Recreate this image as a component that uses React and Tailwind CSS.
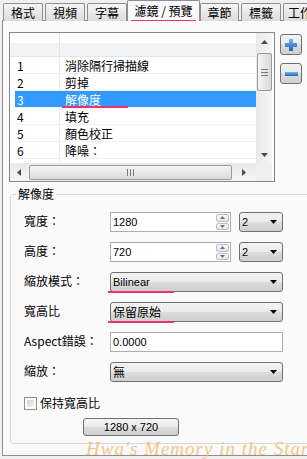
import React from "react";

const tabs = [
  { label: "格式", cls: "ml-[3px] w-[40px] justify-center" },
  { label: "視頻", cls: "ml-[2px] w-[40px] justify-center" },
  { label: "字幕", cls: "ml-[2px] w-[40px] justify-center" },
  { label: "濾鏡 / 預覽", active: true, cls: "w-[73px]" },
  { label: "章節", cls: "w-[39px] justify-center" },
  { label: "標籤", cls: "ml-[2px] w-[40px] justify-center" },
  { label: "工作", cls: "ml-[2px] w-[50px] justify-start pl-[4px]" },
];

const filters = [
  ["1", "消除隔行掃描線"],
  ["2", "剪掉"],
  ["3", "解像度", true],
  ["4", "填充"],
  ["5", "顏色校正"],
  ["6", "降噪："],
  ["", ""],
];

const winGrad = "bg-[linear-gradient(#f2f2f2,#ebebeb_50%,#dddddd_50%,#cfcfcf)]";
const latin = "font-['Liberation_Sans',sans-serif] text-[11px]";

const Tri = ({ dir, color = "#4a4a4a" }) => {
  if (dir === "up")
    return (
      <svg width="7" height="4" viewBox="0 0 7 4">
        <path d="M0 4L3.5 0L7 4Z" fill={color} />
      </svg>
    );
  if (dir === "down")
    return (
      <svg width="7" height="4" viewBox="0 0 7 4">
        <path d="M0 0L7 0L3.5 4Z" fill={color} />
      </svg>
    );
  if (dir === "left")
    return (
      <svg width="4" height="7" viewBox="0 0 4 7">
        <path d="M4 0L4 7L0 3.5Z" fill={color} />
      </svg>
    );
  return (
    <svg width="4" height="7" viewBox="0 0 4 7">
      <path d="M0 0L4 3.5L0 7Z" fill={color} />
    </svg>
  );
};

const Dropdown = ({ value, width, mark, textCls = "text-[12px]" }) => (
  <div
    className={`relative ${width} h-[20px] rounded-[3px] border border-[#707070] ${winGrad} flex items-center justify-between pl-[2px] pr-[5px]`}
  >
    <span className={`${textCls} leading-none text-black`}>{value}</span>
    <Tri dir="down" color="#000" />
    {mark && (
      <div className="absolute left-[-3px] bottom-[-2px] w-[66px] h-[2px] bg-[#f0306e]" />
    )}
  </div>
);

const Spin = () => (
  <div className="w-[14px] h-full flex flex-col justify-center gap-px py-px pr-px">
    {["up", "down"].map((d) => (
      <div
        key={d}
        className="h-[8px] rounded-[2px] border border-[#b9bcc2] bg-gradient-to-b from-[#fbfbfb] to-[#e2e4e8] flex items-center justify-center"
      >
        {d === "up" ? (
          <svg width="5" height="3" viewBox="0 0 5 3">
            <path d="M0 3L2.5 0L5 3Z" fill="#56739b" />
          </svg>
        ) : (
          <svg width="5" height="3" viewBox="0 0 5 3">
            <path d="M0 0L5 0L2.5 3Z" fill="#56739b" />
          </svg>
        )}
      </div>
    ))}
  </div>
);

const Label = ({ children }) => (
  <div className="w-[86px] mb-[3px] text-[12px] leading-[14px] text-black">{children}</div>
);

export default function App() {
  return (
    <div className="relative w-[307px] h-[459px] overflow-hidden bg-[#f0f0f0] font-['Noto_Sans_CJK_TC',sans-serif] text-black">
      {/* tabs */}
      <div className="flex items-end h-[21px]">
        {tabs.map((t) =>
          t.active ? (
            <div
              key={t.label}
              className={`relative z-10 ${t.cls} h-[21px] shrink-0 border border-b-0 border-[#8c8e94] rounded-t-[2px] bg-[#fafafa] flex flex-col items-center pt-[3px]`}
            >
              <span className="text-[12px] leading-[14px] whitespace-nowrap">{t.label}</span>
              <div className="mt-[2px] w-[65px] h-[2px] bg-[#f0306e]" />
            </div>
          ) : (
            <div
              key={t.label}
              className={`${t.cls} h-[18px] shrink-0 border border-b-0 border-[#8c8e94] rounded-t-[2px] bg-gradient-to-b from-[#f5f5f5] to-[#dcdcdc] flex items-center`}
            >
              <span className="text-[12px] leading-none whitespace-nowrap">{t.label}</span>
            </div>
          )
        )}
      </div>

      {/* panel */}
      <div className="-mt-px ml-[2px] w-[330px] h-[436px] border border-[#8c8e94] bg-[#fafafa] flex flex-col">
        <div className="flex pt-[11px] pl-[6px]">
          {/* list box */}
          <div className="w-[266px] h-[150px] border border-[#828790] bg-white flex flex-col">
            <div className="flex h-[130px]">
              <div className="w-[246px] flex flex-col overflow-hidden">
                <div className="h-[24px] shrink-0 flex border-b border-[#e5e5e5] bg-[linear-gradient(#ffffff,#ffffff_45%,#f2f3f5_45%,#f2f3f5)]">
                  <div className="w-[50px] border-r border-[#e5e5e5]" />
                  <div className="flex-1" />
                </div>
                <div className="ml-[5px] flex flex-col">
                  {filters.map(([n, name, sel], i) => (
                    <div
                      key={i}
                      className={`flex h-[17px] shrink-0 border-b border-[#f0f0f0] text-[12px] leading-[17px] ${
                        sel ? "bg-[#3399ff] text-white" : "text-black"
                      }`}
                    >
                      <div
                        className={`w-[45px] pl-[2px] border-r ${
                          sel ? "border-[#3399ff]" : "border-[#ececec]"
                        }`}
                      >
                        {n}
                      </div>
                      <div className="relative flex-1 pl-[5px]">
                        {name}
                        {sel && (
                          <div className="absolute left-[2px] bottom-[-1px] w-[66px] h-[2px] bg-[#f0306e]" />
                        )}
                      </div>
                    </div>
                  ))}
                </div>
              </div>
              {/* vertical scrollbar */}
              <div className="w-[16px] bg-gradient-to-r from-[#e9e9e9] to-[#f5f5f5] flex flex-col items-center">
                <div className="h-[17px] flex items-center justify-center">
                  <Tri dir="up" />
                </div>
                <div className="mt-[3px] w-[15px] h-[38px] rounded-[2px] border border-[#999999] bg-gradient-to-r from-[#f6f6f6] to-[#dadada] flex flex-col items-center justify-center gap-[2px]">
                  <div className="w-[7px] h-px bg-[#7a7a7a]" />
                  <div className="w-[7px] h-px bg-[#7a7a7a]" />
                  <div className="w-[7px] h-px bg-[#7a7a7a]" />
                </div>
                <div className="flex-1" />
                <div className="h-[17px] flex items-center justify-center">
                  <Tri dir="down" />
                </div>
              </div>
            </div>
            {/* horizontal scrollbar */}
            <div className="flex h-[18px]">
              <div className="w-[246px] bg-gradient-to-b from-[#e9e9e9] to-[#f5f5f5] flex items-center">
                <div className="w-[17px] flex items-center justify-center">
                  <Tri dir="left" />
                </div>
                <div className="ml-[2px] w-[203px] h-[15px] rounded-[2px] border border-[#999999] bg-gradient-to-b from-[#f6f6f6] to-[#dadada] flex items-center justify-center gap-[2px]">
                  <div className="w-px h-[7px] bg-[#7a7a7a]" />
                  <div className="w-px h-[7px] bg-[#7a7a7a]" />
                  <div className="w-px h-[7px] bg-[#7a7a7a]" />
                </div>
                <div className="flex-1 flex items-center justify-center">
                  <Tri dir="right" />
                </div>
              </div>
              <div className="w-[16px] bg-[#f0f0f0]" />
            </div>
          </div>

          {/* plus / minus */}
          <div className="ml-[5px] mt-[2px] flex flex-col gap-[8px]">
            <div className={`w-[22px] h-[21px] rounded-[3px] border border-[#707070] ${winGrad} flex items-center justify-center`}>
              <svg width="12" height="12" viewBox="0 0 12 12">
                <defs>
                  <linearGradient id="pg" x1="0" y1="0" x2="0" y2="1">
                    <stop offset="0" stopColor="#7ab8f0" />
                    <stop offset="1" stopColor="#1f62bd" />
                  </linearGradient>
                </defs>
                <path d="M4 0H8V4H12V8H8V12H4V8H0V4H4Z" fill="url(#pg)" />
              </svg>
            </div>
            <div className={`w-[22px] h-[21px] rounded-[3px] border border-[#707070] ${winGrad} flex items-center justify-center`}>
              <svg width="13" height="4" viewBox="0 0 13 4">
                <defs>
                  <linearGradient id="mg" x1="0" y1="0" x2="0" y2="1">
                    <stop offset="0" stopColor="#7ab8f0" />
                    <stop offset="1" stopColor="#1f62bd" />
                  </linearGradient>
                </defs>
                <rect x="0" y="0" width="13" height="4" fill="url(#mg)" />
              </svg>
            </div>
          </div>
        </div>

        {/* group box */}
        <fieldset className="ml-[7px] mt-[5px] w-[330px] rounded-[3px] border border-[#d3d9de] pb-[7px]">
          <legend className="ml-[5px] px-[2px] text-[12px] leading-[14px]">解像度</legend>
          <div className="pl-[13px] pt-[11px] flex flex-col">
            <div className="flex items-center h-[20px]">
              <Label>寬度：</Label>
              <div className="w-[121px] h-[20px] border border-[#abadb3] bg-white flex items-center">
                <span className={`flex-1 pl-[2px] ${latin}`}>1280</span>
                <Spin />
              </div>
              <div className="ml-[8px]">
                <Dropdown value="2" width="w-[44px]" textCls={latin} />
              </div>
            </div>
            <div className="mt-[10px] flex items-center h-[20px]">
              <Label>高度：</Label>
              <div className="w-[121px] h-[20px] border border-[#abadb3] bg-white flex items-center">
                <span className={`flex-1 pl-[2px] ${latin}`}>720</span>
                <Spin />
              </div>
              <div className="ml-[8px]">
                <Dropdown value="2" width="w-[44px]" textCls={latin} />
              </div>
            </div>
            <div className="mt-[10px] flex items-center h-[20px]">
              <Label>縮放模式：</Label>
              <Dropdown value="Bilinear" width="w-[173px]" mark textCls={latin} />
            </div>
            <div className="mt-[10px] flex items-center h-[20px]">
              <Label>寬高比</Label>
              <Dropdown value="保留原始" width="w-[173px]" mark />
            </div>
            <div className="mt-[10px] flex items-center h-[20px]">
              <Label>Aspect錯誤：</Label>
              <div className="w-[173px] h-[20px] border border-[#abadb3] bg-white flex items-center">
                <span className={`pl-[2px] ${latin}`}>0.0000</span>
              </div>
            </div>
            <div className="mt-[10px] flex items-center h-[20px]">
              <Label>縮放：</Label>
              <Dropdown value="無" width="w-[173px]" />
            </div>
            <div className="mt-[13px] flex items-center h-[16px] gap-[3px]">
              <div className="w-[13px] h-[13px] border border-[#8f8f8f] bg-white p-[2px]">
                <div className="w-full h-full bg-gradient-to-br from-[#cbcfd5] to-[#f4f4f4]" />
              </div>
              <span className="text-[12px] leading-[14px]">保持寬高比</span>
            </div>
            <div className="mt-[7px] ml-[59px]">
              <div className={`w-[96px] h-[18px] rounded-[3px] border border-[#707070] ${winGrad} flex items-center justify-center ${latin}`}>
                1280 x 720
              </div>
            </div>
          </div>
        </fieldset>
      </div>

      {/* watermark */}
      <div className="absolute left-[86px] top-[435px] whitespace-nowrap text-[19px] italic tracking-[1px] text-[#f2c27a] opacity-90 font-['Liberation_Serif',serif]">
        Hwa's Memory in the Star.
      </div>
    </div>
  );
}
